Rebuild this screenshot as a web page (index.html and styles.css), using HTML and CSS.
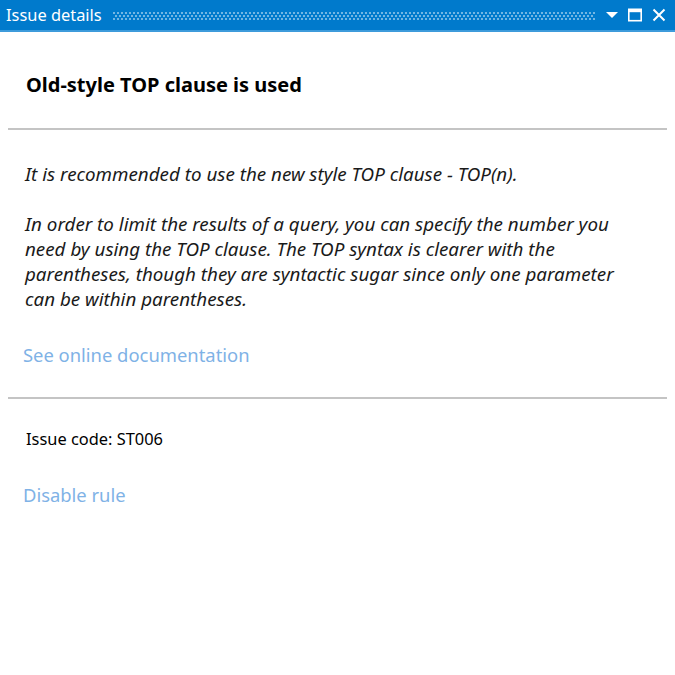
FILE: index.html
```html
<!DOCTYPE html>
<html>
<head>
<meta charset="utf-8">
<link rel="stylesheet" href="styles.css">
</head>
<body>
<div class="window">
  <div class="titlebar">
    <span class="title">Issue details</span>
    <span class="grip"></span>
    <span class="buttons">
      <svg class="btn" width="14" height="14" viewBox="0 0 14 14"><polygon points="1,4 13,4 7,10" fill="#fff"/></svg>
      <svg class="btn" width="16" height="16" viewBox="0 0 16 16"><rect x="1.8" y="2.3" width="12.4" height="11.4" fill="none" stroke="#fff" stroke-width="1.6"/><rect x="1.8" y="2" width="12.4" height="3.2" fill="#fff"/></svg>
      <svg class="btn" width="16" height="16" viewBox="0 0 16 16"><path d="M2.5 2.5 L13.5 13.5 M13.5 2.5 L2.5 13.5" stroke="#fff" stroke-width="2"/></svg>
    </span>
  </div>
  <div class="content">
    <h1 class="heading">Old-style TOP clause is used</h1>
    <hr class="sep">
    <p class="desc">It is recommended to use the new style TOP clause - TOP(n).</p>
    <p class="desc">In order to limit the results of a query, you can specify the number you need by using the TOP clause. The TOP syntax is clearer with the parentheses, though they are syntactic sugar since only one parameter can be within parentheses.</p>
    <a class="link doc">See online documentation</a>
    <hr class="sep">
    <p class="code">Issue code: ST006</p>
    <a class="link">Disable rule</a>
  </div>
</div>
</body>
</html>
```
FILE: styles.css
```css
html, body {
  margin: 0;
  padding: 0;
  background: #fff;
}
body {
  font-family: "Noto Sans", "Open Sans", sans-serif;
  width: 675px;
  height: 675px;
  overflow: hidden;
}
.titlebar {
  height: 30px;
  background: #007acc;
  border-bottom: 2px solid #3e9bdb;
  display: flex;
  align-items: center;
  color: #fff;
}
.title {
  font-size: 16.4px;
  padding-left: 6px;
  padding-right: 11px;
  line-height: 30px;
}
.grip {
  flex: 1;
  height: 9px;
  margin-top: 2px;
  background-image:
    radial-gradient(circle at 1px 1px, rgba(255,255,255,0.45) 0.8px, transparent 1.1px),
    radial-gradient(circle at 3px 4px, rgba(255,255,255,0.45) 0.8px, transparent 1.1px);
  background-size: 4px 6px;
  margin-right: 10px;
}
.buttons {
  display: flex;
  align-items: center;
  gap: 8px;
  padding-right: 8px;
}
.btn {
  display: block;
}
.content {
  padding: 0 8px;
}
.heading {
  font-size: 20px;
  font-weight: bold;
  margin: 0;
  padding: 41px 0 0 18px;
  line-height: 24px;
  height: 55px;
  color: #000;
}
.sep {
  border: 0;
  height: 2px;
  background: #c4c4c4;
  margin: 0;
}
.desc {
  font-style: italic;
  font-size: 18.8px;
  line-height: 25px;
  margin: 32px 0 0 0;
  padding: 0 30px 0 17px;
  color: #1a1a1a;
}
.desc + .desc {
  margin-top: 25px;
}
.link {
  display: block;
  color: #7fb2e6;
  font-size: 18.4px;
  padding-left: 15px;
  line-height: 24px;
}
.doc {
  margin-top: 31px;
  margin-bottom: 30px;
}
.code {
  font-size: 16.4px;
  margin: 29px 0 0 0;
  padding-left: 18px;
  line-height: 22px;
  color: #000;
}
.code + .link {
  margin-top: 33px;
}
```
